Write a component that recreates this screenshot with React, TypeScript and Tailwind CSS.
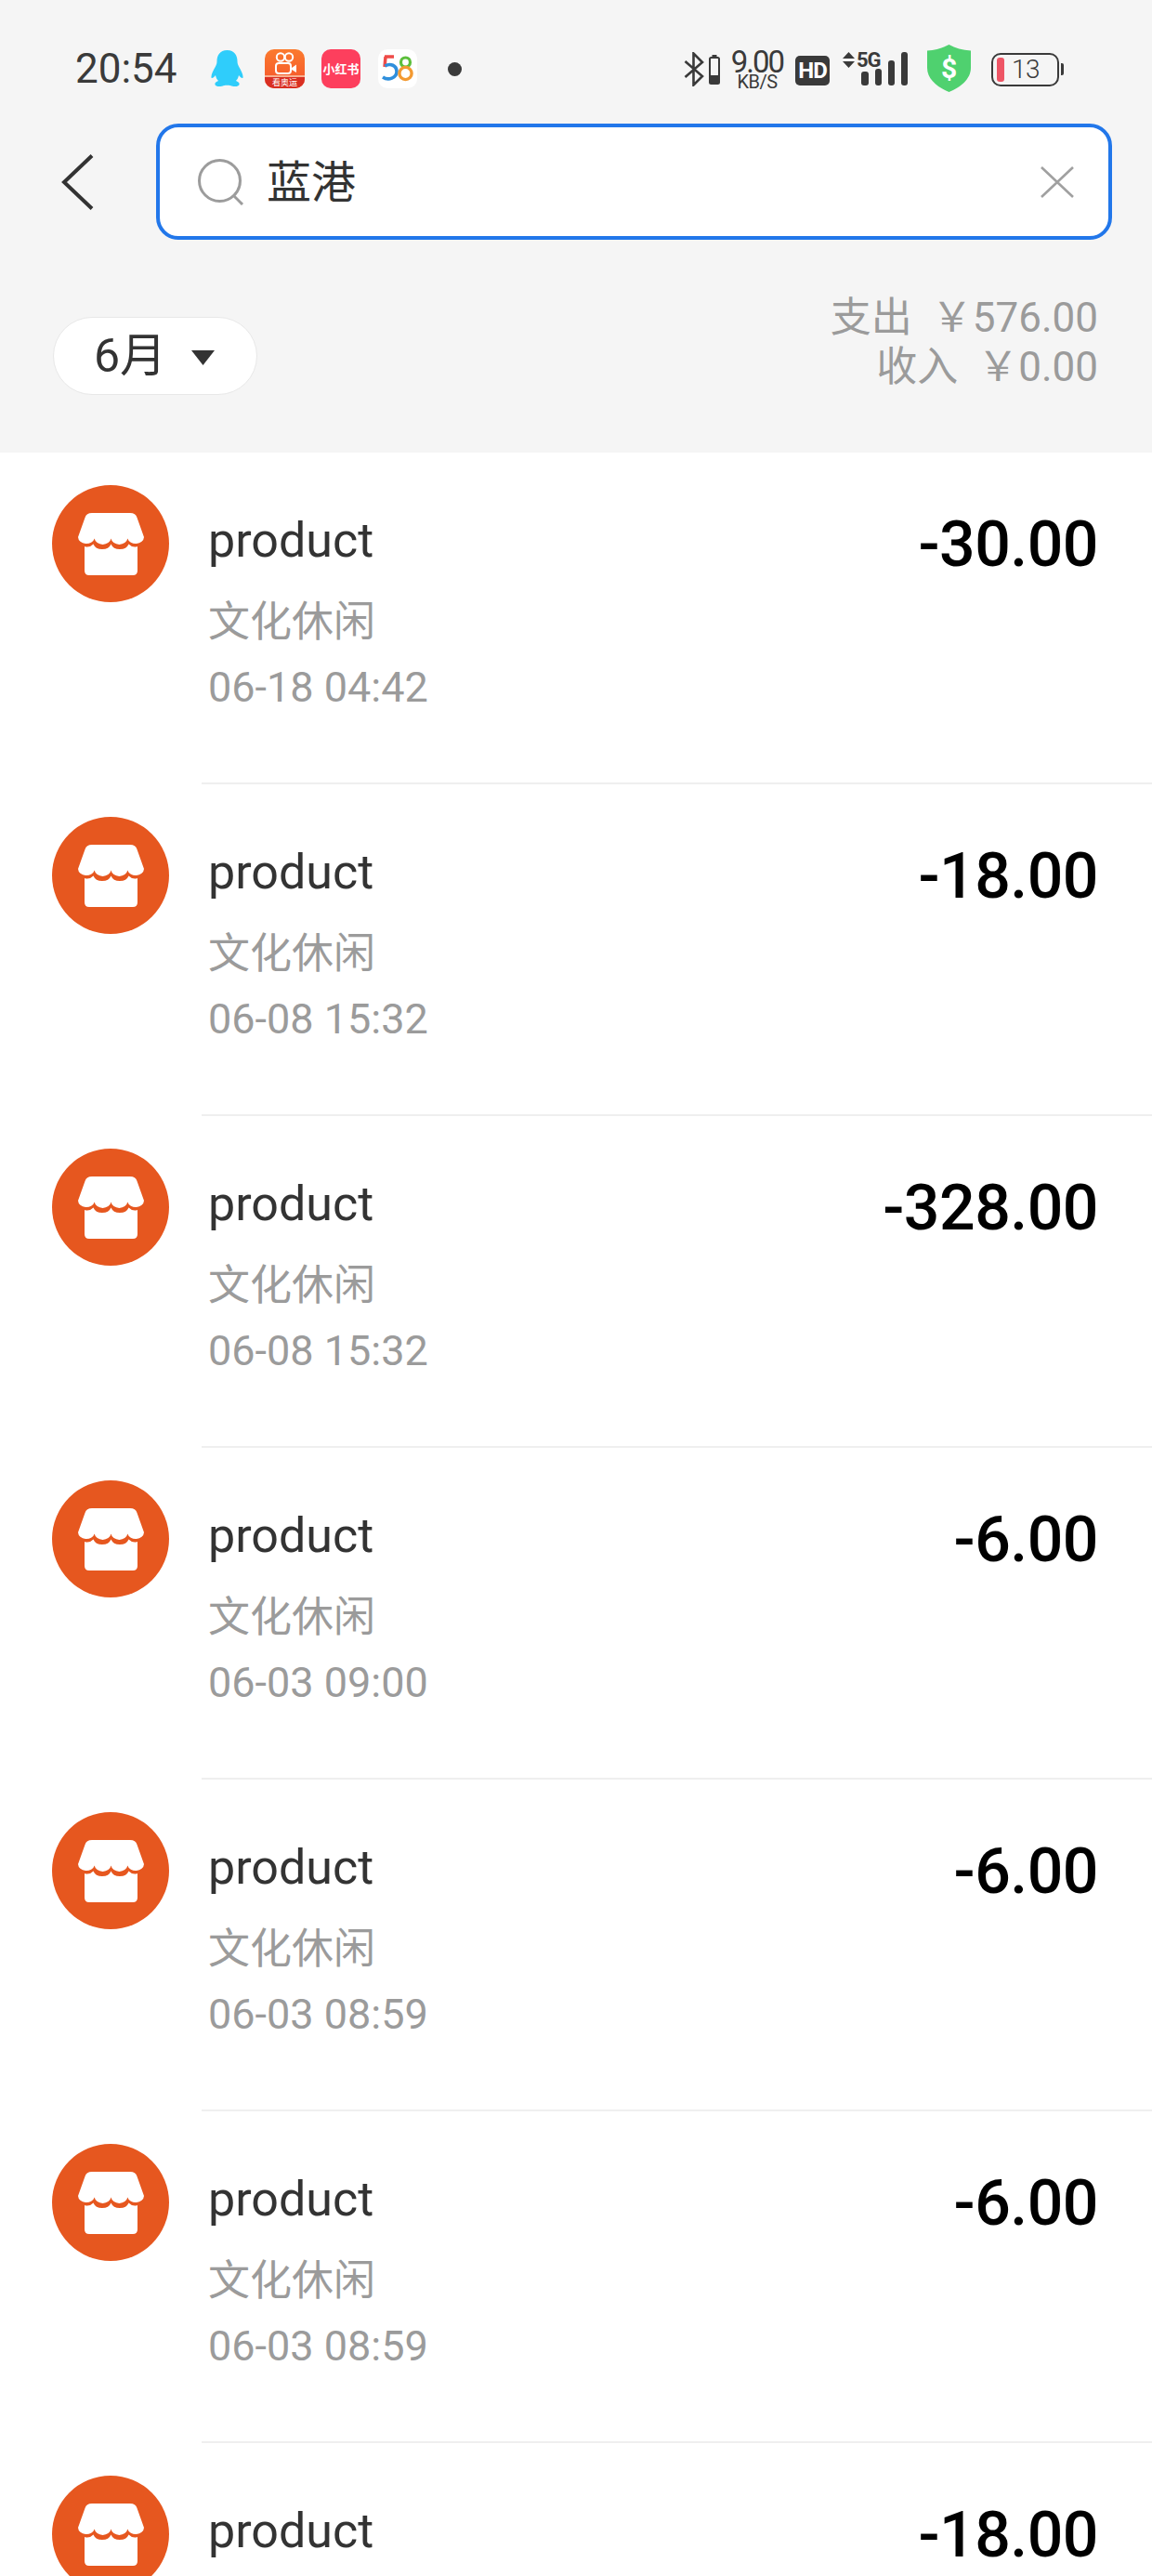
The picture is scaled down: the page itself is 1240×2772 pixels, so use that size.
import React from 'react';

// the last row runs off the bottom of the screen, only its first line shows
const rows = [
  { date: '06-18 04:42', amount: '-30.00' },
  { date: '06-08 15:32', amount: '-18.00' },
  { date: '06-08 15:32', amount: '-328.00' },
  { date: '06-03 09:00', amount: '-6.00' },
  { date: '06-03 08:59', amount: '-6.00' },
  { date: '06-03 08:59', amount: '-6.00' },
  { date: '', amount: '-18.00' },
];

const StoreIcon = () => (
  <svg viewBox="0 0 126 126" className="w-[126px] h-[126px] shrink-0">
    <circle cx="63" cy="63" r="63" fill="#e6571f" />
    <path
      fill="#fff"
      d="M43 30H84Q90 30 91.5 35L99 56A9 7.5 0 0 1 81.3 57.5A9 7.5 0 0 1 63.5 57.5A9 7.5 0 0 1 45.7 57.5A9 7.5 0 0 1 28 56L35.5 35Q37 30 43 30Z"
    />
    <path
      fill="#fff"
      d="M35 66Q40 68 44.5 63.5A10 8 0 0 0 63.5 63.5A10 8 0 0 0 82.5 63.5Q87 68 92 66V92Q92 97 87 97H40Q35 97 35 92Z"
    />
  </svg>
);

const QQIcon = () => (
  <svg viewBox="0 0 35 40" className="w-[35px] h-[40px]">
    <path
      fill="#2fcdfb"
      d="M17.5 0C9.5 0 6.5 6 6.5 12C6.5 14 6 15.5 5 17.5C2.5 22 0 26.5 0.5 29.5C1 31 3 29.5 5 27C5.5 29.5 6.5 31.5 8 33C5.5 34 4 35 4.5 37C5 39.5 11 39.5 14 38C15.5 37.6 19.5 37.6 21 38C24 39.5 30 39.5 30.5 37C31 35 29.5 34 27 33C28.5 31.5 29.5 29.5 30 27C32 29.5 34 31 34.5 29.5C35 26.5 32.5 22 30 17.5C29 15.5 28.5 14 28.5 12C28.5 6 25.5 0 17.5 0Z"
    />
  </svg>
);

const KuaishouIcon = () => (
  <div className="w-[43px] h-[42px] rounded-[10px] overflow-hidden bg-gradient-to-b from-[#fb7a2e] to-[#f4512b] flex flex-col items-center">
    <svg viewBox="0 0 43 28" className="w-[43px] h-[28px] shrink-0">
      <circle cx="17" cy="8.5" r="4.2" fill="none" stroke="#fff" strokeWidth="2" />
      <circle cx="26" cy="8.5" r="4.2" fill="none" stroke="#fff" strokeWidth="2" />
      <rect x="12" y="15" width="16" height="11" rx="3" fill="none" stroke="#fff" strokeWidth="2" />
      <path d="M29 20L34 16.5V25L29 22Z" fill="#fff" />
    </svg>
    <div className="w-full flex-1 bg-[#d92f22] border-t-2 border-[#f9b08f] flex items-center justify-center text-[9px] leading-none text-white whitespace-nowrap">
      看奥运
    </div>
  </div>
);

const Logo58 = () => (
  <div className="w-[42px] h-[42px] rounded-[10px] bg-white flex items-center justify-center">
    <svg viewBox="0 0 34 30" className="w-[34px] h-[30px]">
      <path d="M3 2H13" stroke="#ee4b48" strokeWidth="3.5" fill="none" />
      <path d="M4 2L3 13" stroke="#ee4b48" strokeWidth="3.5" fill="none" />
      <path d="M3.5 12C9 8.5 16 11.5 16 18C16 25 7 28 1 24" stroke="#2f8fdc" strokeWidth="3.6" fill="none" />
      <circle cx="25.5" cy="8" r="5" stroke="#5cbf3c" strokeWidth="3.2" fill="none" />
      <circle cx="25.5" cy="20" r="6.6" stroke="#f39a32" strokeWidth="3.4" fill="none" />
    </svg>
  </div>
);

const StatusBar = () => (
  <div className="h-[133px] pt-[53px] flex items-start text-[#3a3a3a]">
    <div className="w-[227px] pl-[81px] text-[44px] leading-[44px] -mt-[1px] shrink-0">20:54</div>
    <div className="flex items-center h-[42px]">
      <QQIcon />
      <div className="ml-[23px]"><KuaishouIcon /></div>
      <div className="ml-[18px] w-[42px] h-[42px] rounded-[10px] bg-[#fd3f5d] flex items-center justify-center text-white text-[13px] leading-none font-bold whitespace-nowrap">
        小红书
      </div>
      <div className="ml-[19px]"><Logo58 /></div>
      <div className="ml-[33px] w-[15px] h-[15px] rounded-full bg-[#3a3a3a]" />
    </div>

    <div className="ml-[239px] flex items-start">
      <svg viewBox="0 0 22 37" className="w-[22px] h-[37px] mt-[3px]">
        <path d="M1.5 10L20 26L10.5 35.5V1.5L20 11L1.5 27" fill="none" stroke="#3a3a3a" strokeWidth="2.6" />
      </svg>
      <svg viewBox="0 0 12 32" className="w-[12px] h-[32px] ml-[5px] mt-[6px]">
        <rect x="3.5" y="0" width="5" height="3" fill="#3a3a3a" />
        <rect x="1" y="3" width="10" height="28" rx="1.5" fill="none" stroke="#3a3a3a" strokeWidth="2" />
        <rect x="1" y="22" width="10" height="9" fill="#3a3a3a" />
      </svg>
      <div className="ml-[11px] w-[58px] flex flex-col items-center">
        <div className="text-[33px] leading-[26px] tracking-[-2px] whitespace-nowrap mt-[1px]">9.00</div>
        <div className="text-[20px] leading-[15px] tracking-[-0.5px] whitespace-nowrap mt-[1px]">KB/S</div>
      </div>
      <div className="ml-[12px] mt-[7px] w-[37px] h-[32px] rounded-[5px] bg-[#3a3a3a] text-white text-[24px] leading-[32px] font-bold text-center tracking-[-1px]">
        HD
      </div>
      <div className="ml-[14px] flex items-start shrink-0">
        <svg viewBox="0 0 13 17" className="w-[13px] h-[17px] mt-[3px]">
          <path d="M6.5 0L13 7H0Z M0 10H13L6.5 17Z" fill="#3a3a3a" />
        </svg>
        <span className="ml-[2px] w-[0px] whitespace-nowrap text-[22px] leading-[20px] font-bold tracking-[-1px] mt-[2px]">5G</span>
      </div>
      <div className="ml-[5px] mt-[3px] flex items-end gap-[7px] h-[36px]">
        <div className="w-[8px] h-[15px] rounded-[3px] bg-[#3a3a3a]" />
        <div className="w-[7px] h-[18px] rounded-[3px] bg-[#3a3a3a]" />
        <div className="w-[7px] h-[27px] rounded-[3px] bg-[#3a3a3a]" />
        <div className="w-[7px] h-[36px] rounded-[3px] bg-[#3a3a3a]" />
      </div>
      <div className="ml-[21px] -mt-[5px] relative w-[47px] h-[51px]">
        <svg viewBox="0 0 47 51" className="w-[47px] h-[51px]">
          <path d="M23.5 0C30 3.5 38 6 47 6.5V25C47 37 36 46 23.5 51C11 46 0 37 0 25V6.5C9 6 17 3.5 23.5 0Z" fill="#4fd16f" />
        </svg>
        <div className="absolute inset-0 flex items-center justify-center text-white text-[30px] leading-none font-bold">$</div>
      </div>
      <div className="ml-[22px] w-[73px] h-[36px] mt-[4px] rounded-[10px] border-[2px] border-[#3a3a3a] flex items-center pl-[4px] shrink-0">
        <div className="w-[8px] h-[26px] rounded-[3px] bg-[#ee5565]" />
        <div className="ml-[8px] text-[28px] leading-none tracking-[-0.5px] font-light">13</div>
      </div>
      <div className="ml-[2px] mt-[15px] w-[3px] h-[13px] rounded-r-[2px] bg-[#3a3a3a]" />
    </div>
  </div>
);

const App = () => {
  return (
    <div className="w-[1240px] h-[2772px] overflow-hidden bg-white font-['Roboto','Noto_Sans_CJK_SC',sans-serif]">
      {/* Header */}
      <div className="h-[487px] bg-[#f5f5f5]">
        <StatusBar />

        <div className="flex items-center h-[125px]">
          <svg viewBox="0 0 36 60" className="ml-[65px] w-[36px] h-[60px] shrink-0">
            <path d="M34 1.5L4 30L34 58.5" fill="none" stroke="#333" strokeWidth="4" />
          </svg>
          <div className="ml-[67px] w-[1029px] h-[125px] rounded-[24px] border-[4px] border-[#2277ea] bg-white flex items-center pl-[41px] pr-[37px]">
            <svg viewBox="0 0 50 50" className="w-[50px] h-[50px] shrink-0">
              <circle cx="23.5" cy="23.5" r="22" fill="none" stroke="#9c9c9c" strokeWidth="3" />
              <path d="M38 39L48 49" stroke="#9c9c9c" strokeWidth="3" />
            </svg>
            <span className="ml-[24px] text-[48px] leading-none text-[#333] mt-[3px]">蓝港</span>
            <svg viewBox="0 0 36 34" className="ml-auto w-[36px] h-[34px]">
              <path d="M1 1L35 33M35 1L1 33" stroke="#a0a0a0" strokeWidth="2.6" fill="none" />
            </svg>
          </div>
        </div>

        <div className="flex justify-between pl-[57px] pr-[58px]">
          <div className="mt-[83px] w-[220px] h-[84px] rounded-full bg-white border border-[#e8e8e8] flex items-center pl-[43px]">
            <span className="text-[50px] leading-none text-[#333]">6月</span>
            <svg viewBox="0 0 25 16" className="ml-[27px] w-[25px] h-[16px] mt-[3px]">
              <path d="M0 0H25L12.5 16Z" fill="#333" />
            </svg>
          </div>
          <div className="mt-[58px] text-right text-[44px] leading-[53px] text-[#9b9b9b]">
            <div><span className="mr-[10px]">支出</span> ￥576.00</div>
            <div><span className="mr-[10px]">收入</span> ￥0.00</div>
          </div>
        </div>
      </div>

      {/* Rows */}
      {rows.map((row, i) => (
        <div key={i}>
          <div className="h-[355px] pt-[35px] pl-[56px] pr-[58px] flex items-start">
            <StoreIcon />
            <div className="ml-[42px] flex-1">
              <div className="text-[52px] leading-[60px] text-[#333] mt-[30px]">product</div>
              {row.date && (
                <>
                  <div className="text-[45px] leading-[50px] text-[#9b9b9b] mt-[33px]">文化休闲</div>
                  <div className="text-[45px] leading-[50px] text-[#9b9b9b] mt-[20px]">{row.date}</div>
                </>
              )}
            </div>
            <div className="text-[68px] leading-[70px] font-medium text-black tracking-[-0.5px] mt-[29px]">{row.amount}</div>
          </div>
          <div className="ml-[217px] h-[2px] bg-[#efefef]" />
        </div>
      ))}
    </div>
  );
};

export default App;
